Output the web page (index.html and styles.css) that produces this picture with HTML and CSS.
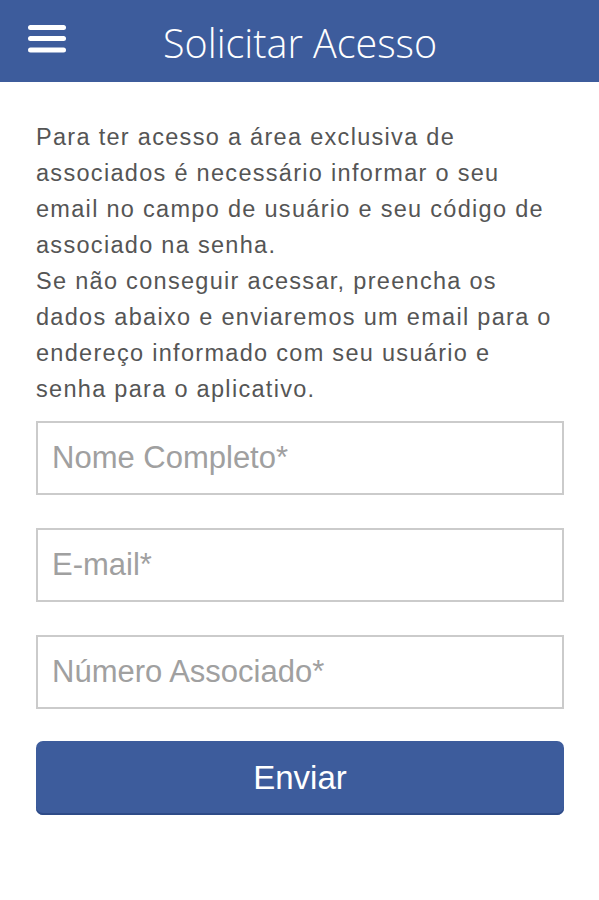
FILE: index.html
```html
<!DOCTYPE html>
<html lang="pt-BR">
<head>
<meta charset="utf-8">
<title>Solicitar Acesso</title>
<link rel="stylesheet" href="styles.css">
</head>
<body>
<header class="topbar">
  <button class="menu-btn" aria-label="Menu">
    <svg width="40" height="32" viewBox="0 0 40 32">
      <g stroke="#fff" stroke-width="5" stroke-linecap="round">
        <line x1="3.5" y1="4.5" x2="36.5" y2="4.5"/>
        <line x1="3.5" y1="15.5" x2="36.5" y2="15.5"/>
        <line x1="3.5" y1="27" x2="36.5" y2="27"/>
      </g>
    </svg>
  </button>
  <h1 class="title">Solicitar Acesso</h1>
</header>
<main class="content">
  <p class="intro">Para ter acesso a área exclusiva de<br>associados é necessário informar o seu<br>email no campo de usuário e seu código de<br>associado na senha.<br>Se não conseguir acessar, preencha os<br>dados abaixo e enviaremos um email para o<br>endereço informado com seu usuário e<br>senha para o aplicativo.</p>
  <form class="form">
    <input class="field" type="text" placeholder="Nome Completo*">
    <input class="field" type="email" placeholder="E-mail*">
    <input class="field" type="text" placeholder="Número Associado*">
    <button class="submit" type="button">Enviar</button>
  </form>
</main>
</body>
</html>
```

FILE: styles.css
```css
html, body {
  margin: 0;
  padding: 0;
  background: #fff;
}
body {
  font-family: "Liberation Sans", Arial, sans-serif;
}
.topbar {
  height: 82px;
  background: #3d5c9c;
  display: flex;
  align-items: center;
}
.menu-btn {
  background: none;
  border: 0;
  padding: 0;
  margin-left: 27px;
  margin-top: -4px;
  display: flex;
}
.title {
  margin: 0 0 0 96px;
  font-family: "Open Sans", sans-serif;
  font-weight: 300;
  font-size: 39.5px;
  color: #fff;
  margin-top: 4px;
  white-space: nowrap;
}
.content {
  padding: 37px 35px 0 36px;
}
.intro {
  margin: 0;
  font-size: 23.5px;
  line-height: 36px;
  letter-spacing: 1.3px;
  color: #555;
  white-space: nowrap;
}
.form {
  display: flex;
  flex-direction: column;
  gap: 33px;
  margin-top: 14px;
}
.field {
  box-sizing: border-box;
  height: 74px;
  width: 100%;
  border: 2px solid #cbcbcb;
  padding: 0 14px;
  font-family: "Liberation Sans", Arial, sans-serif;
  font-size: 31px;
  color: #555;
  background: #fff;
  outline: none;
}
.field::placeholder {
  color: #a0a0a0;
}
.submit {
  height: 74px;
  margin-top: -1px;
  border: 0;
  border-radius: 7px;
  background: #3d5c9c;
  box-shadow: inset 0 -2px 0 #2e4b87;
  color: #fff;
  font-family: "Liberation Sans", Arial, sans-serif;
  font-size: 33px;
  cursor: pointer;
}
```
